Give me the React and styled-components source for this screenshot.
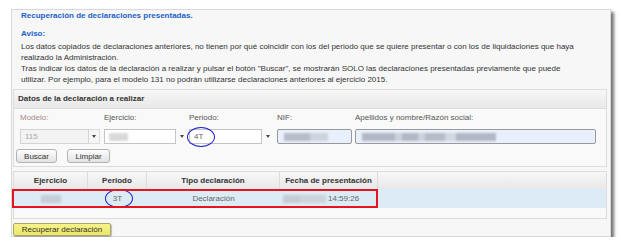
import React from 'react'
import styled, { createGlobalStyle } from 'styled-components'

const GlobalStyle = createGlobalStyle`
    body {
        margin: 0;
        background: #fff;
        font-family: "Liberation Sans", Arial, sans-serif;
        font-size: 8px;
        color: #333;
    }
`

const Window = styled.div`
    box-sizing: border-box;
    width: 600px;
    height: 228px;
    margin: 9px 0 0 11px;
    padding: 0 3px 0 1px;
    display: flex;
    flex-direction: column;
    background: #f7f7f7;
    border: 1px solid #d8d8d8;
    box-shadow: 3px 3px 3px rgba(0, 0, 0, 0.55);
`

const Title = styled.div`
    height: 12px;
    line-height: 12px;
    padding-left: 8px;
    font-weight: bold;
    color: #1b61c9;
    margin-top: ${p => p.$gap || 0}px;
`

const Notice = styled.div`
    margin-top: 1px;
    padding-left: 8px;
    line-height: 11px;
    white-space: nowrap;
    color: #333;
`

const Panel = styled.section`
    margin-top: 4px;
    border: 1px solid #dcdcdc;
    background: #f9f9f9;
`

const PanelHeader = styled.div`
    height: 18px;
    line-height: 18px;
    padding-left: 4px;
    font-weight: bold;
    color: #333;
    background: linear-gradient(#f7f7f7, #e8e8e8);
    border-bottom: 1px solid #dcdcdc;
`

const PanelBody = styled.div`
    padding: 3px 0 3px 6px;
`

const Fields = styled.div`
    display: flex;
`

const Field = styled.div`
    width: ${p => p.$w}px;
    display: flex;
    flex-direction: column;
`

const Label = styled.label`
    height: 11px;
    line-height: 11px;
    margin-bottom: 6px;
    color: ${p => (p.$disabled ? '#a68a8a' : '#555')};
`

const Combo = styled.div`
    position: relative;
    display: flex;
    height: 15px;
`

const ComboInput = styled.div`
    box-sizing: border-box;
    width: ${p => p.$w}px;
    height: 15px;
    padding-left: 4px;
    display: flex;
    align-items: center;
    border: 1px solid ${p => (p.$disabled ? '#d4d4d4' : '#c4c4c4')};
    background: ${p => (p.$disabled ? '#f3f3f3' : '#fff')};
    color: ${p => (p.$disabled ? '#aaa' : '#666')};
`

const ComboArrow = styled.div`
    box-sizing: border-box;
    width: 11px;
    height: 15px;
    display: flex;
    align-items: center;
    justify-content: center;
    border: ${p => (p.$disabled ? '1px solid #dcdcdc' : 'none')};
    border-left: none;
    background: ${p => (p.$disabled ? '#f6f6f6' : 'transparent')};

    &::after {
        content: '';
        border-left: 2.5px solid transparent;
        border-right: 2.5px solid transparent;
        border-top: 3px solid #444;
    }
`

const TextInput = styled.div`
    box-sizing: border-box;
    width: ${p => p.$w}px;
    height: 15px;
    padding-left: 6px;
    display: flex;
    align-items: center;
    border: 1px solid #9a9a9a;
    border-radius: 2px;
    background: #e8f0fd;
`

const Blur = styled.span`
    display: inline-block;
    width: ${p => p.$w}px;
    height: 8px;
    background: ${p => p.$bg};
    filter: blur(1px);
`

const ButtonRow = styled.div`
    display: flex;
    gap: 10px;
    margin: 5px 0 0 -4px;
`

const Button = styled.button`
    box-sizing: border-box;
    width: ${p => p.$w}px;
    height: 14px;
    padding: 0;
    font: inherit;
    color: #333;
    border: 1px solid #b3b3b3;
    border-radius: 3px;
    background: linear-gradient(#fdfdfd, #e2e2e2);
`

const Results = styled.div`
    position: relative;
    box-sizing: border-box;
    height: 48px;
    margin-top: 4px;
    border: 1px solid #dcdcdc;
    background: #f9f9f9;
`

const columns = '74px 59px 133px 98px 1fr'

const HeaderRow = styled.div`
    display: grid;
    grid-template-columns: ${columns};
    height: 17px;
    background: linear-gradient(#f7f7f7, #e8e8e8);
`

const HeaderCell = styled.div`
    line-height: 17px;
    text-align: center;
    font-weight: bold;
    color: #333;
    border-right: 1px solid #dcdcdc;

    &:last-child {
        border-right: none;
    }
`

const DataRow = styled.div`
    display: grid;
    grid-template-columns: 74px 59px 133px 98px;
    height: 19px;
    background: #dcebf6;
`

const Cell = styled.div`
    position: relative;
    display: flex;
    align-items: center;
    justify-content: ${p => (p.$left ? 'flex-start' : 'center')};
    padding-left: ${p => (p.$left ? 3 : 0)}px;
    gap: 2px;
    color: #666;
`

const Highlight = styled.div`
    position: absolute;
    left: -2px;
    top: 17px;
    box-sizing: border-box;
    width: 366px;
    height: 19px;
    border: 2px solid #e6141c;
`

const Circle = styled.span`
    position: absolute;
    left: ${p => p.$left};
    top: ${p => p.$top}px;
    box-sizing: border-box;
    width: 28px;
    height: ${p => p.$h}px;
    border: 1.5px solid #1d1fd0;
    border-radius: 50%;
`

const RecoverButton = styled.button`
    box-sizing: border-box;
    align-self: flex-start;
    width: 98px;
    height: 13px;
    margin-top: 4px;
    padding: 0;
    font: inherit;
    color: #333;
    border: 1px solid #a9a66c;
    border-radius: 2px;
    background: linear-gradient(#f7f38a, #ece66a);
    box-shadow: 1px 1px 1px rgba(0, 0, 0, 0.25);
`

const App = () => (
    <>
        <GlobalStyle />
        <Window>
            <Title>Recuperación de declaraciones presentadas.</Title>
            <Title $gap={6}>Aviso:</Title>
            <Notice>
                Los datos copiados de declaraciones anteriores, no tienen por qué coincidir con los del periodo que se quiere presentar o con los de liquidaciones que haya
                <br />
                realizado la Administración.
                <br />
                Tras indicar los datos de la declaración a realizar y pulsar el botón "Buscar", se mostrarán SOLO las declaraciones presentadas previamente que puede
                <br />
                utilizar. Por ejemplo, para el modelo 131 no podrán utilizarse declaraciones anteriores al ejercicio 2015.
            </Notice>

            <Panel>
                <PanelHeader>Datos de la declaración a realizar</PanelHeader>
                <PanelBody>
                    <Fields>
                        <Field $w={84}>
                            <Label $disabled>Modelo:</Label>
                            <Combo>
                                <ComboInput $w={69} $disabled>115</ComboInput>
                                <ComboArrow $disabled />
                            </Combo>
                        </Field>
                        <Field $w={85}>
                            <Label>Ejercicio:</Label>
                            <Combo>
                                <ComboInput $w={72}>
                                    <Blur $w={19} $bg="#d9d9d9" />
                                </ComboInput>
                                <ComboArrow />
                            </Combo>
                        </Field>
                        <Field $w={88}>
                            <Label>Periodo:</Label>
                            <Combo>
                                <ComboInput $w={73}>4T</ComboInput>
                                <ComboArrow />
                                <Circle $left="-2px" $top={-2} $h={20} />
                            </Combo>
                        </Field>
                        <Field $w={78}>
                            <Label>NIF:</Label>
                            <TextInput $w={75}>
                                <Blur $w={44} $bg="linear-gradient(90deg, #b9bdc8 0 60%, #cfd3dc 60%)" />
                            </TextInput>
                        </Field>
                        <Field $w={241}>
                            <Label>Apellidos y nombre/Razón social:</Label>
                            <TextInput $w={241}>
                                <Blur
                                    $w={134}
                                    $bg="linear-gradient(90deg, #b3b7c3 0 25%, #cdd1da 25% 30%, #b3b7c3 30% 42%, #cdd1da 42% 47%, #b8bcc7 47% 62%, #d3d7e0 62% 70%, #b3b7c3 70%)"
                                />
                            </TextInput>
                        </Field>
                    </Fields>
                    <ButtonRow>
                        <Button $w={41}>Buscar</Button>
                        <Button $w={43}>Limpiar</Button>
                    </ButtonRow>
                </PanelBody>
            </Panel>

            <Results>
                <HeaderRow>
                    <HeaderCell>Ejercicio</HeaderCell>
                    <HeaderCell>Periodo</HeaderCell>
                    <HeaderCell>Tipo declaración</HeaderCell>
                    <HeaderCell>Fecha de presentación</HeaderCell>
                    <HeaderCell />
                </HeaderRow>
                <DataRow>
                    <Cell>
                        <Blur $w={20} $bg="#c6ced6" />
                    </Cell>
                    <Cell>
                        3T
                        <Circle $left="calc(50% - 13px)" $top={0} $h={19} />
                    </Cell>
                    <Cell>Declaración</Cell>
                    <Cell $left>
                        <Blur $w={43} $bg="linear-gradient(90deg, #c4ccd4 0 40%, #ccd4dc 40%)" />
                        14:59:26
                    </Cell>
                </DataRow>
                <Highlight />
            </Results>

            <RecoverButton>Recuperar declaración</RecoverButton>
        </Window>
    </>
)

export default App
